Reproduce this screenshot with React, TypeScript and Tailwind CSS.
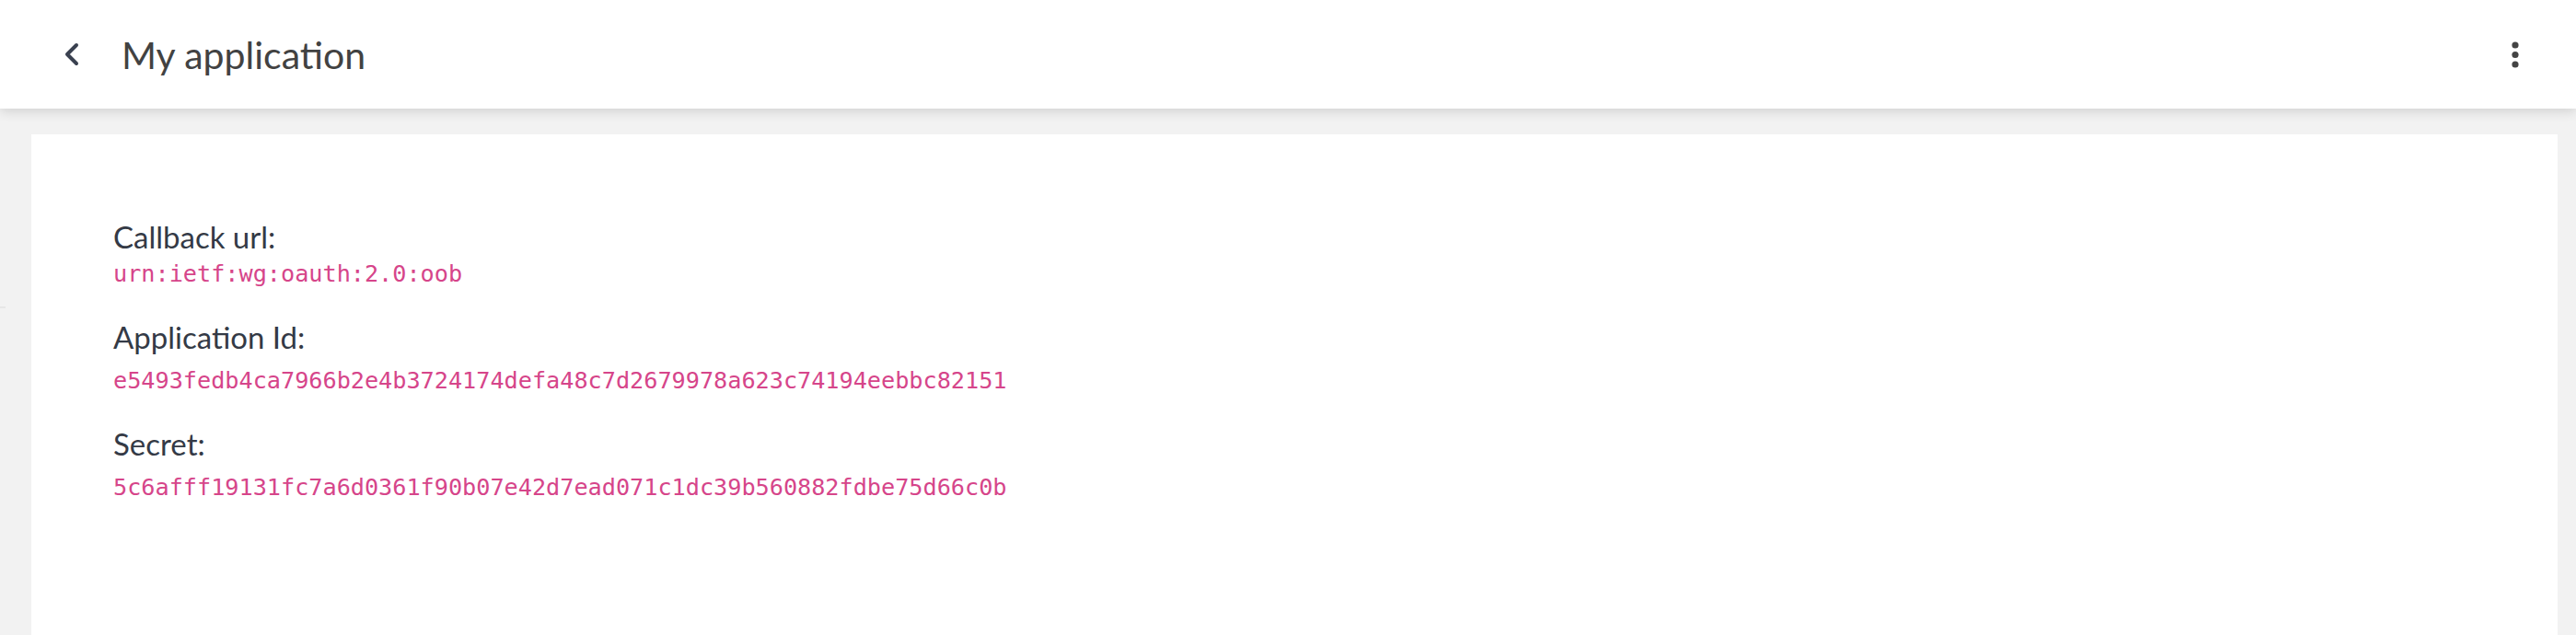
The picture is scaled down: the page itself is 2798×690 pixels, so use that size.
import { ChevronLeft } from "lucide-react";

const fields = [
  { label: "Callback url:", value: "urn:ietf:wg:oauth:2.0:oob", gap: "mt-[3px]" },
  { label: "Application Id:", value: "e5493fedb4ca7966b2e4b3724174defa48c7d2679978a623c74194eebbc82151", gap: "mt-[10px]" },
  { label: "Secret:", value: "5c6afff19131fc7a6d0361f90b07e42d7ead071c1dc39b560882fdbe75d66c0b", gap: "mt-[10px]" },
];

export default function App() {
  return (
    <div className="relative min-h-[690px] bg-[#f2f2f2] font-['Lato',sans-serif]">
      <header className="relative z-10 flex h-[118px] items-center justify-between bg-white pl-[58px] pr-[46px] shadow-[0_3px_12px_rgba(0,0,0,0.14)]">
        <div className="flex items-center gap-[34px]">
          <ChevronLeft size={40} strokeWidth={2.4} className="text-[#3a4150]" />
          <h1 className="text-[41px] leading-none text-[#424242]">My application</h1>
        </div>
        <button className="flex h-[40px] w-[40px] items-center justify-center">
          <svg width="8" height="29" viewBox="0 0 8 29" className="fill-[#444]">
            <circle cx="4" cy="4" r="3.6" />
            <circle cx="4" cy="14.5" r="3.6" />
            <circle cx="4" cy="25" r="3.6" />
          </svg>
        </button>
      </header>

      <div className="absolute left-0 top-[333px] h-[2px] w-[6px] bg-[#e6e6e6]" />

      <main className="pl-[34px] pr-[20px] pt-[28px]">
        <section className="min-h-[544px] bg-white pl-[89px] pt-[91px]">
          {fields.map((f, i) => (
            <div key={f.label} className={i === 0 ? "" : "mt-[30px]"}>
              <div className="text-[33px] leading-[40px] text-[#343a46]">{f.label}</div>
              <div className={`${f.gap} font-['DejaVu_Sans_Mono',monospace] text-[25.2px] leading-[36px] text-[#d6458a]`}>
                {f.value}
              </div>
            </div>
          ))}
        </section>
      </main>
    </div>
  );
}
